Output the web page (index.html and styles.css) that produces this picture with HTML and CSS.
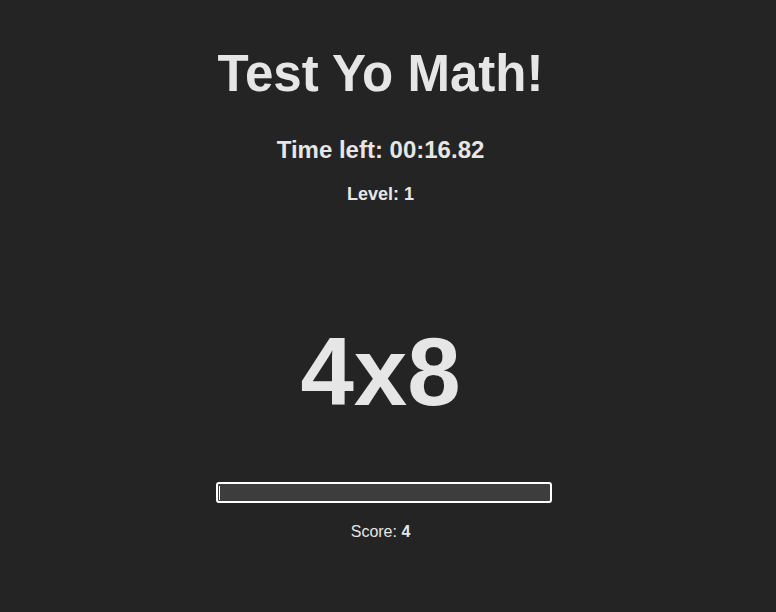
FILE: index.html
```html
<!DOCTYPE html>
<html lang="en">
<head>
<meta charset="utf-8">
<title>Test Yo Math!</title>
<link rel="stylesheet" href="styles.css">
</head>
<body>
<main class="game">
  <h1 class="title">Test Yo Math!</h1>
  <h2 class="timer">Time left: 00:16.82</h2>
  <h3 class="level">Level: 1</h3>
  <div class="problem">4x8</div>
  <div class="answer">
    <input class="answer-input" type="text" aria-label="Answer">
    <span class="caret"></span>
  </div>
  <p class="score">Score: <strong>4</strong></p>
</main>
</body>
</html>
```

FILE: styles.css
```css
html, body {
  margin: 0;
  padding: 0;
  background: #242424;
}

body {
  color: #e6e6e6;
  font-family: "Liberation Sans", Arial, sans-serif;
}

.game {
  width: 761px;
  display: flex;
  flex-direction: column;
  align-items: center;
  padding-top: 45px;
}

.title {
  margin: 0;
  font-size: 51px;
  line-height: 58px;
  font-weight: bold;
}

.timer {
  margin: 33px 0 0;
  font-size: 24px;
  line-height: 28px;
  font-weight: bold;
}

.level {
  margin: 20px 0 0;
  font-size: 18px;
  line-height: 21px;
  font-weight: bold;
}

.problem {
  margin-top: 112px;
  font-size: 96px;
  line-height: 110px;
  font-weight: bold;
}

.answer {
  position: relative;
  margin-top: 55px;
  margin-left: 7px;
  width: 336px;
  height: 21px;
}

.answer-input {
  box-sizing: border-box;
  display: block;
  width: 336px;
  height: 21px;
  margin: 0;
  padding: 0 4px;
  border: 2px solid #ffffff;
  border-radius: 3px;
  background: #3d3d3d;
  color: #e6e6e6;
  font-family: "Liberation Sans", Arial, sans-serif;
  font-size: 14px;
  outline: none;
}

.caret {
  position: absolute;
  left: 3px;
  top: 4px;
  width: 1px;
  height: 14px;
  background: #ffffff;
}

.score {
  margin: 20px 0 0;
  font-size: 16px;
  line-height: 18px;
}

.score strong {
  font-weight: bold;
}
```
